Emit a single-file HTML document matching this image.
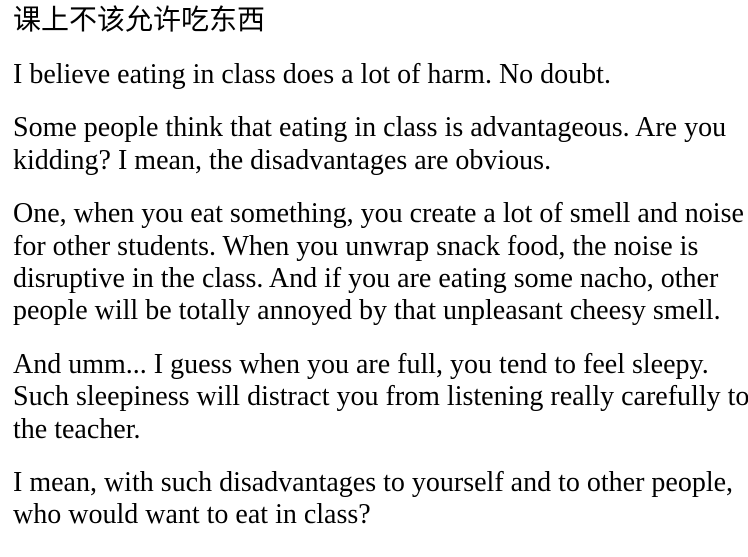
<!DOCTYPE html>
<html><head><meta charset="utf-8"><style>
html,body{margin:0;padding:0;background:#fff;width:748px;height:557px;overflow:hidden}
body{font-family:"Liberation Serif","Noto Serif CJK SC",serif;font-size:28px;line-height:32.4px;color:#000;padding-left:13px;white-space:nowrap}
h1{font-family:"Noto Sans CJK SC",sans-serif;font-weight:normal;font-size:28px;letter-spacing:0;line-height:32px;margin:2px 0 0 0}
p{margin:0 0 21px 0}
p.first{margin-top:25px}
</style></head><body>
<h1>课上不该允许吃东西</h1>
<p class="first">I believe eating in class does a lot of harm. No doubt.</p>
<p>Some people think that eating in class is advantageous. Are you<br>kidding? I mean, the disadvantages are obvious.</p>
<p>One, when you eat something, you create a lot of smell and noise<br>for other students. When you unwrap snack food, the noise is<br>disruptive in the class. And if you are eating some nacho, other<br>people will be totally annoyed by that unpleasant cheesy smell.</p>
<p>And umm... I guess when you are full, you tend to feel sleepy.<br>Such sleepiness will distract you from listening really carefully to<br>the teacher.</p>
<p>I mean, with such disadvantages to yourself and to other people,<br>who would want to eat in class?</p>
</body></html>
